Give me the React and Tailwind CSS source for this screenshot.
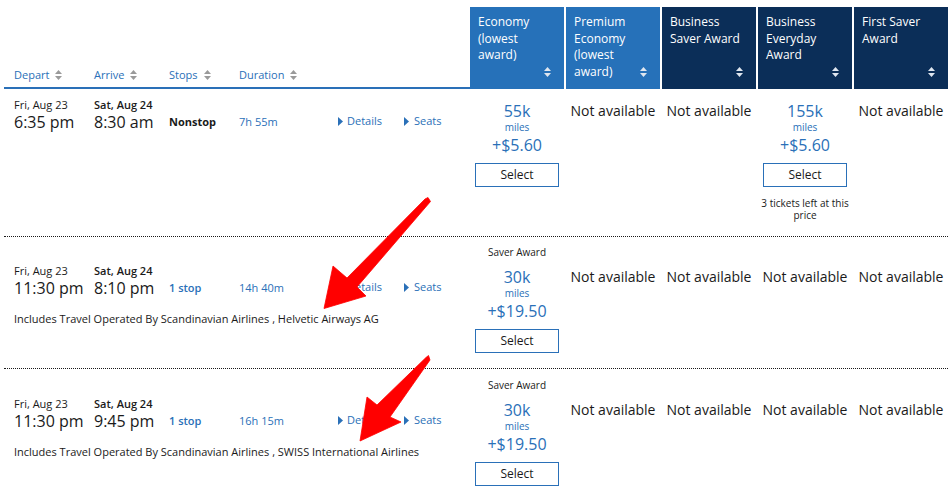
import React from "react";

const BLUE = "text-[#2a70b8]";

function SortIcon({ className }) {
  return (
    <svg width="7" height="10" viewBox="0 0 7 10" className={className}>
      <path d="M0 4 L3.5 0 L7 4Z M0 6 L3.5 10 L7 6Z" fill="currentColor" />
    </svg>
  );
}

function Tri() {
  return (
    <svg width="5" height="9" viewBox="0 0 5 9">
      <path d="M0 0 L5 4.5 L0 9Z" fill="#2a70b8" />
    </svg>
  );
}

function HeadCell({ children, dark }) {
  return (
    <div
      className={`relative px-[8px] pt-[7px] text-[12px] leading-[16.5px] text-white ${
        dark ? "bg-[#0b2e58]" : "bg-[#2671b9]"
      }`}
    >
      <div>{children}</div>
      <SortIcon className="absolute right-[13px] bottom-[12px] text-[#dfe6ef]" />
    </div>
  );
}

function FlightInfo({ arr, dep, stops, nonstop, dur, pt, includes }) {
  return (
    <div className={`w-[466px] pl-[10px] ${pt}`}>
      <div className="flex items-end">
        <div className="w-[80px]">
          <div className="text-[11px] leading-[14px] text-[#1a1a1a]">Fri, Aug 23</div>
          <div className="text-[16px] leading-[20px] text-[#1a1a1a]">{dep}</div>
        </div>
        <div className="w-[75px]">
          <div className="text-[11px] leading-[14px] font-semibold text-[#1a1a1a]">Sat, Aug 24</div>
          <div className="text-[16px] leading-[20px] text-[#1a1a1a]">{arr}</div>
        </div>
        <div
          className={`w-[70px] text-[11px] leading-[20px] ${
            nonstop ? "font-bold text-[#1a1a1a]" : "font-semibold " + BLUE
          }`}
        >
          {stops}
        </div>
        <div className={`w-[99px] text-[11px] leading-[20px] ${BLUE}`}>{dur}</div>
        <div className={`w-[66px] flex items-center gap-[4px] text-[11px] leading-[20px] mb-[1px] ${BLUE}`}>
          <Tri />
          <span>Details</span>
        </div>
        <div className={`flex items-center gap-[5px] text-[11px] leading-[20px] mb-[1px] ${BLUE}`}>
          <Tri />
          <span>Seats</span>
        </div>
      </div>
      {includes && (
        <div className="mt-[14px] text-[11px] leading-[14px] text-[#1a1a1a]">{includes}</div>
      )}
    </div>
  );
}

function Price({ label, miles, fee, note }) {
  return (
    <div className={`flex flex-col items-center text-center ${BLUE}`}>
      {label && <div className="text-[10px] leading-[12px] text-[#1a1a1a] mb-[9px]">{label}</div>}
      <div className="text-[16px] leading-[20px]">{miles}</div>
      <div className="text-[10px] leading-[12px]">miles</div>
      <div className="text-[16px] leading-[24px]">{fee}</div>
      <button className="mt-[6px] w-[84px] h-[24px] border border-[#2a70b8] bg-white text-[12px] text-[#1a1a1a]">
        Select
      </button>
      {note && <div className="mt-[10px] text-[10px] leading-[12px] text-[#1a1a1a] px-[2px]">{note}</div>}
    </div>
  );
}

function NA({ pt }) {
  return <div className={`text-center text-[14px] leading-[20px] text-[#1a1a1a] ${pt}`}>Not available</div>;
}

export default function App() {
  return (
    <div className="relative w-[952px] h-[498px] overflow-hidden bg-white font-['Open_Sans',sans-serif]">
      <div className="ml-[4px] w-[944px] pt-[7px]">
        {/* header */}
        <div className="flex h-[82px]">
          <div className={`w-[466px] flex items-end border-b-2 border-[#2a70b8] pl-[10px] pb-[4px] text-[11px] leading-[16px] ${BLUE}`}>
            <div className="w-[80px] flex items-center gap-[6px]">
              Depart <SortIcon className="text-[#9a9a9a]" />
            </div>
            <div className="w-[75px] flex items-center gap-[6px]">
              Arrive <SortIcon className="text-[#9a9a9a]" />
            </div>
            <div className="w-[70px] flex items-center gap-[6px]">
              Stops <SortIcon className="text-[#9a9a9a]" />
            </div>
            <div className="flex items-center gap-[6px]">
              Duration <SortIcon className="text-[#9a9a9a]" />
            </div>
          </div>
          <div className="grid grid-cols-[repeat(5,94px)] grid-rows-[82px] gap-x-[2px]">
            <HeadCell>Economy (lowest award)</HeadCell>
            <HeadCell>Premium Economy (lowest award)</HeadCell>
            <HeadCell dark>Business Saver Award</HeadCell>
            <HeadCell dark>Business Everyday Award</HeadCell>
            <HeadCell dark>First Saver Award</HeadCell>
          </div>
        </div>

        {/* row 1 */}
        <div className="flex pb-[15px]">
          <FlightInfo dep="6:35 pm" arr="8:30 am" stops="Nonstop" nonstop dur="7h 55m" pt="pt-[9px]" />
          <div className="grid grid-cols-[repeat(5,94px)] gap-x-[2px] pt-[12px] items-start">
            <Price miles="55k" fee="+$5.60" />
            <NA pt="" />
            <NA pt="" />
            <Price miles="155k" fee="+$5.60" note="3 tickets left at this price" />
            <NA pt="" />
          </div>
        </div>

        {/* row 2 */}
        <div className="flex pb-[15px] border-t border-dotted border-[#1a1a1a]">
          <FlightInfo
            dep="11:30 pm"
            arr="8:10 pm"
            stops="1 stop"
            dur="14h 40m"
            pt="pt-[27px]"
            includes="Includes Travel Operated By Scandinavian Airlines , Helvetic Airways AG"
          />
          <div className="grid grid-cols-[repeat(5,94px)] gap-x-[2px] pt-[9px] items-start">
            <Price label="Saver Award" miles="30k" fee="+$19.50" />
            <NA pt="pt-[21px]" />
            <NA pt="pt-[21px]" />
            <NA pt="pt-[21px]" />
            <NA pt="pt-[21px]" />
          </div>
        </div>

        {/* row 3 */}
        <div className="flex pb-[15px] border-t border-dotted border-[#1a1a1a]">
          <FlightInfo
            dep="11:30 pm"
            arr="9:45 pm"
            stops="1 stop"
            dur="16h 15m"
            pt="pt-[28px]"
            includes="Includes Travel Operated By Scandinavian Airlines , SWISS International Airlines"
          />
          <div className="grid grid-cols-[repeat(5,94px)] gap-x-[2px] pt-[10px] items-start">
            <Price label="Saver Award" miles="30k" fee="+$19.50" />
            <NA pt="pt-[21px]" />
            <NA pt="pt-[21px]" />
            <NA pt="pt-[21px]" />
            <NA pt="pt-[21px]" />
          </div>
        </div>
      </div>

      {/* red annotation arrows */}
      <svg className="absolute left-0 top-0 pointer-events-none" width="952" height="498" viewBox="0 0 952 498">
        <polygon
          points="425,199 428,197.5 430.5,201.5 357,287 366,296 324,308.5 333,266 347,278"
          fill="#ff0000"
          stroke="#ff0000"
          strokeWidth="0.8"
          strokeLinejoin="round"
        />
        <polygon
          points="426,357.5 428.5,355.5 430,360 390,417 401,422 360,441 367,397 377,405"
          fill="#ff0000"
          stroke="#ff0000"
          strokeWidth="0.8"
          strokeLinejoin="round"
        />
      </svg>
    </div>
  );
}
